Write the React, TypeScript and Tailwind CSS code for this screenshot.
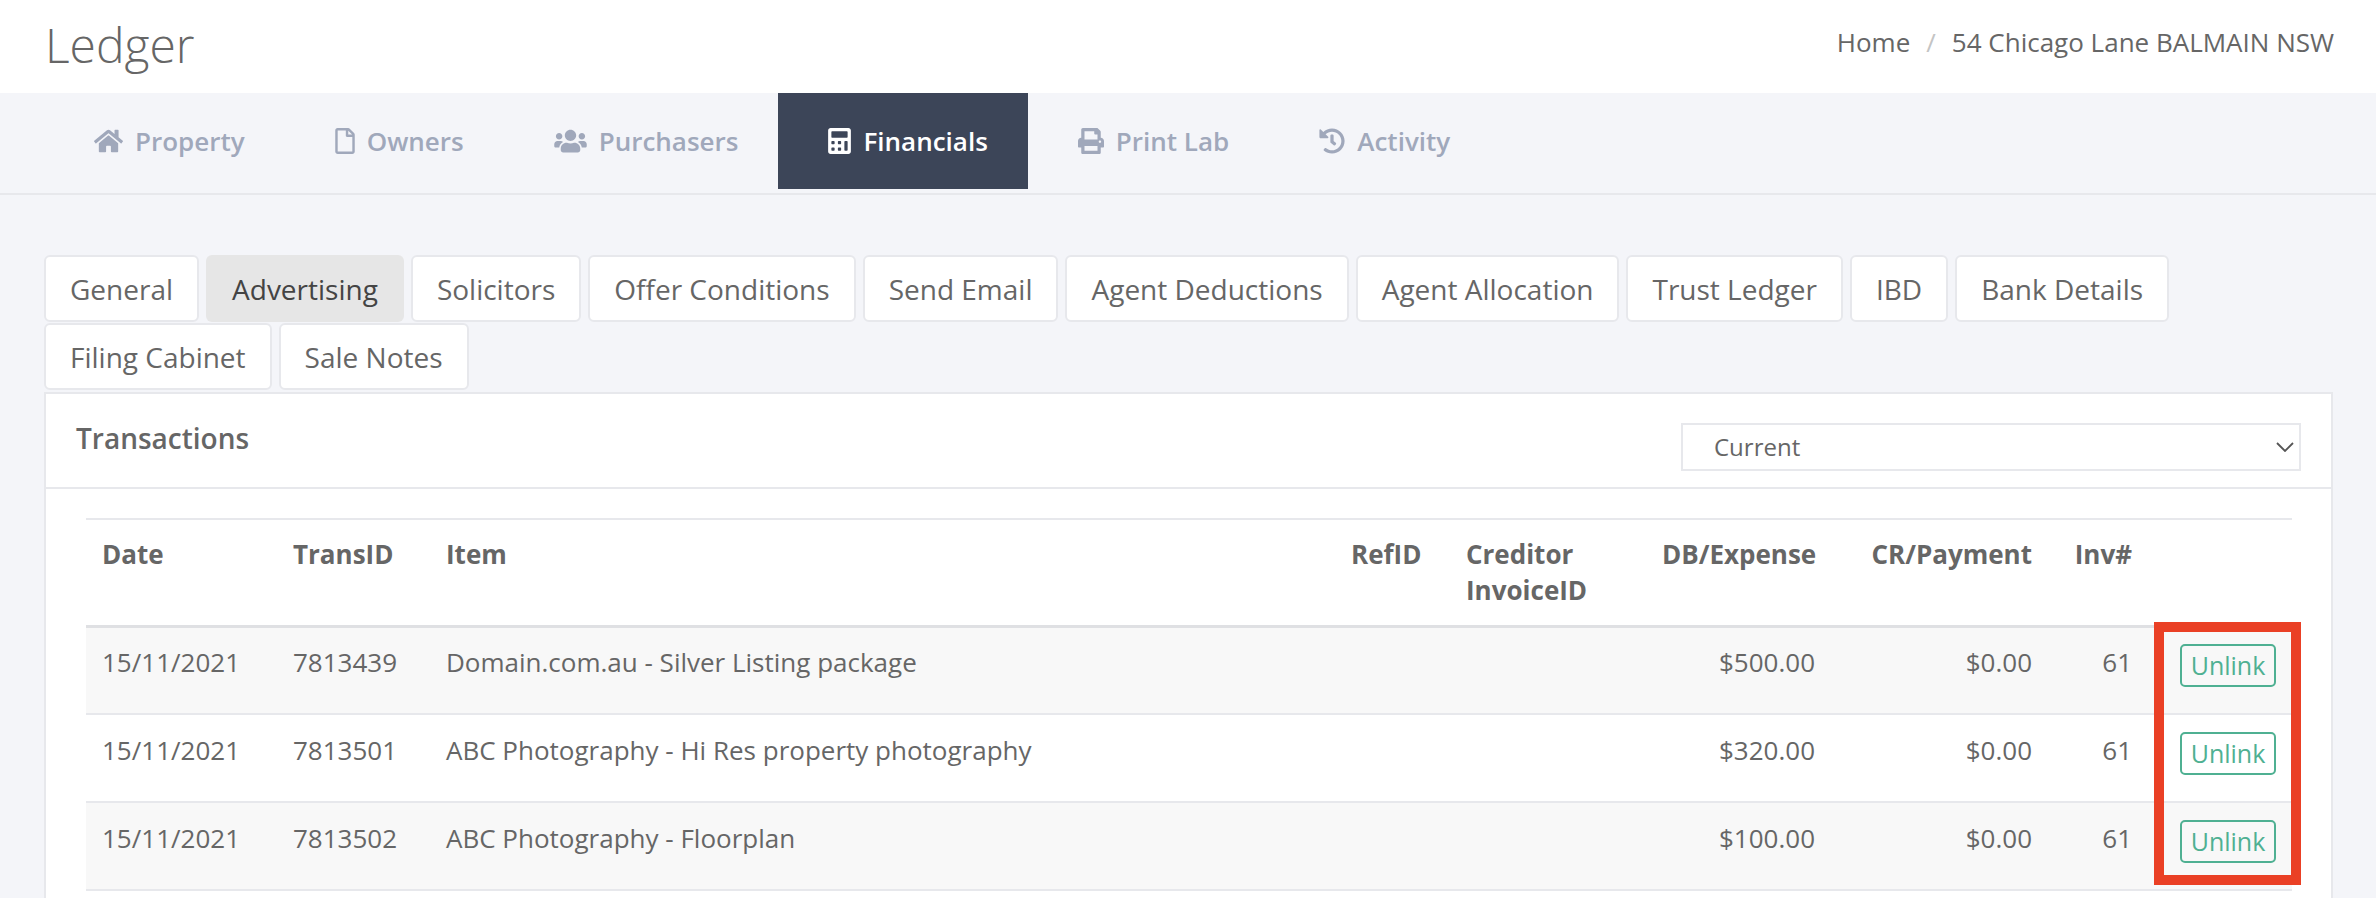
import { FaHome, FaRegFile, FaUsers, FaCalculator, FaPrint, FaHistory } from 'react-icons/fa';

const navItems = [
  { label: 'Property', icon: FaHome, iconClass: 'h-[26px] w-[29px]' },
  { label: 'Owners', icon: FaRegFile, iconClass: 'h-[26px] w-[20px]' },
  { label: 'Purchasers', icon: FaUsers, iconClass: 'h-[26px] w-[33px]' },
  { label: 'Financials', icon: FaCalculator, iconClass: 'h-[26px] w-[23px]', active: true },
  { label: 'Print Lab', icon: FaPrint, iconClass: 'h-[26px] w-[26px]' },
  { label: 'Activity', icon: FaHistory, iconClass: 'h-[26px] w-[26px]' },
];

const tabs = [
  'General',
  'Advertising',
  'Solicitors',
  'Offer Conditions',
  'Send Email',
  'Agent Deductions',
  'Agent Allocation',
  'Trust Ledger',
  'IBD',
  'Bank Details',
  'Filing Cabinet',
  'Sale Notes',
];

const rows = [
  { id: '7813439', item: 'Domain.com.au - Silver Listing package', db: '$500.00' },
  { id: '7813501', item: 'ABC Photography - Hi Res property photography', db: '$320.00' },
  { id: '7813502', item: 'ABC Photography - Floorplan', db: '$100.00' },
];

export default function App() {
  return (
    <div className="h-[898px] overflow-hidden bg-[#f4f5f9] font-['Open_Sans',sans-serif] text-[#666666]">
      {/* Page title */}
      <div className="flex h-[93px] items-center justify-between bg-white pl-[45px] pr-[42px]">
        <h1 className="pb-[4px] text-[48px] font-light leading-none">Ledger</h1>
        <div className="flex items-center pb-[8px] text-[26px]">
          <span>Home</span>
          <span className="mx-[16px] text-[#c4c4c4]">/</span>
          <span>54 Chicago Lane BALMAIN NSW</span>
        </div>
      </div>

      {/* Main nav */}
      <div className="flex h-[102px] border-b-2 border-[#e7e8ec] pb-[4px] pl-[44px]">
        {navItems.map(({ label, icon: Icon, iconClass, active }) => (
          <div
            key={label}
            className={
              active
                ? 'flex items-center gap-[12px] bg-[#3c4558] pl-[50px] pr-[40px] text-[26px] font-semibold text-white'
                : 'flex items-center gap-[12px] pl-[50px] pr-[40px] text-[26px] font-semibold text-[#a0a8bb]'
            }
          >
            <Icon className={iconClass} />
            <span>{label}</span>
          </div>
        ))}
      </div>

      <div className="pl-[44px] pr-[43px] pt-[60px]">
        {/* Sub tabs */}
        <div className="flex flex-wrap gap-x-[7px] gap-y-[1px]">
          {tabs.map((tab) =>
            tab === 'Advertising' ? (
              <div
                key={tab}
                className="flex h-[67px] items-center rounded-[6px] bg-[#e6e6e6] px-[26px] text-[28px] text-[#444444]"
              >
                {tab}
              </div>
            ) : (
              <div
                key={tab}
                className="flex h-[67px] items-center rounded-[6px] border-2 border-[#e7e8ec] bg-white px-[24px] text-[28px]"
              >
                {tab}
              </div>
            ),
          )}
        </div>

        {/* Transactions panel */}
        <div className="mt-[2px] border-2 border-[#e7e8ec] bg-white pb-[40px]">
          <div className="flex h-[95px] justify-between border-b-2 border-[#e7e8ec] pl-[30px] pr-[30px] pt-[29px]">
            <h2 className="text-[28px] font-semibold leading-[30px]">Transactions</h2>
            <div className="flex h-[48px] w-[620px] items-center justify-between border-2 border-[#e7e8ec] pl-[31px] pr-[5px] text-[24px]">
              <span>Current</span>
              <svg width="18" height="10" viewBox="0 0 18 10" fill="none" stroke="#555555" strokeWidth="1.8">
                <path d="M1 1l8 8 8-8" />
              </svg>
            </div>
          </div>

          <div className="relative mt-[29px] ml-[40px] w-[2206px]">
            <table className="w-full table-fixed border-t-2 border-[#e7e8ec] text-[26px]">
              <colgroup>
                <col className="w-[191px]" />
                <col className="w-[153px]" />
                <col className="w-[905px]" />
                <col className="w-[115px]" />
                <col className="w-[196px]" />
                <col className="w-[185px]" />
                <col className="w-[217px]" />
                <col className="w-[100px]" />
                <col className="w-[144px]" />
              </colgroup>
              <thead>
                <tr className="h-[107px] border-b-[3px] border-[#dfe0e3] align-top font-bold leading-[36px]">
                  <th className="px-[16px] pt-[16px] text-left font-bold">Date</th>
                  <th className="px-[16px] pt-[16px] text-left font-bold">TransID</th>
                  <th className="px-[16px] pt-[16px] text-left font-bold">Item</th>
                  <th className="px-[16px] pt-[16px] text-left font-bold">RefID</th>
                  <th className="px-[16px] pt-[16px] text-left font-bold">
                    Creditor
                    <br />
                    InvoiceID
                  </th>
                  <th className="px-[16px] pt-[16px] text-right font-bold">DB/Expense</th>
                  <th className="px-[16px] pt-[16px] text-right font-bold">CR/Payment</th>
                  <th className="px-[16px] pt-[16px] text-right font-bold">Inv#</th>
                  <th />
                </tr>
              </thead>
              <tbody>
                {rows.map((row, i) => (
                  <tr
                    key={row.id}
                    className={
                      i % 2 === 0
                        ? 'h-[88px] border-b-2 border-[#e7e8ec] bg-[#f8f8f8]'
                        : 'h-[88px] border-b-2 border-[#e7e8ec] bg-white'
                    }
                  >
                    <td className="px-[16px] pb-[16px]">15/11/2021</td>
                    <td className="px-[16px] pb-[16px]">{row.id}</td>
                    <td className="px-[16px] pb-[16px]">{row.item}</td>
                    <td className="px-[16px] pb-[16px]" />
                    <td className="px-[16px] pb-[16px]" />
                    <td className="px-[16px] pb-[16px] text-right">{row.db}</td>
                    <td className="px-[16px] pb-[16px] text-right">$0.00</td>
                    <td className="px-[16px] pb-[16px] text-right">61</td>
                    <td className="pb-[9px] pl-[32px]">
                      <button className="flex h-[43px] w-[96px] items-center justify-center rounded-[5px] border-2 border-[#4fb092] text-[25px] text-[#4fb092]">
                        Unlink
                      </button>
                    </td>
                  </tr>
                ))}
              </tbody>
            </table>
            {/* Red annotation box drawn over the last column */}
            <div className="absolute left-[2068px] top-[104px] h-[263px] w-[147px] border-[10px] border-[#ea4025]" />
          </div>
        </div>
      </div>
    </div>
  );
}
